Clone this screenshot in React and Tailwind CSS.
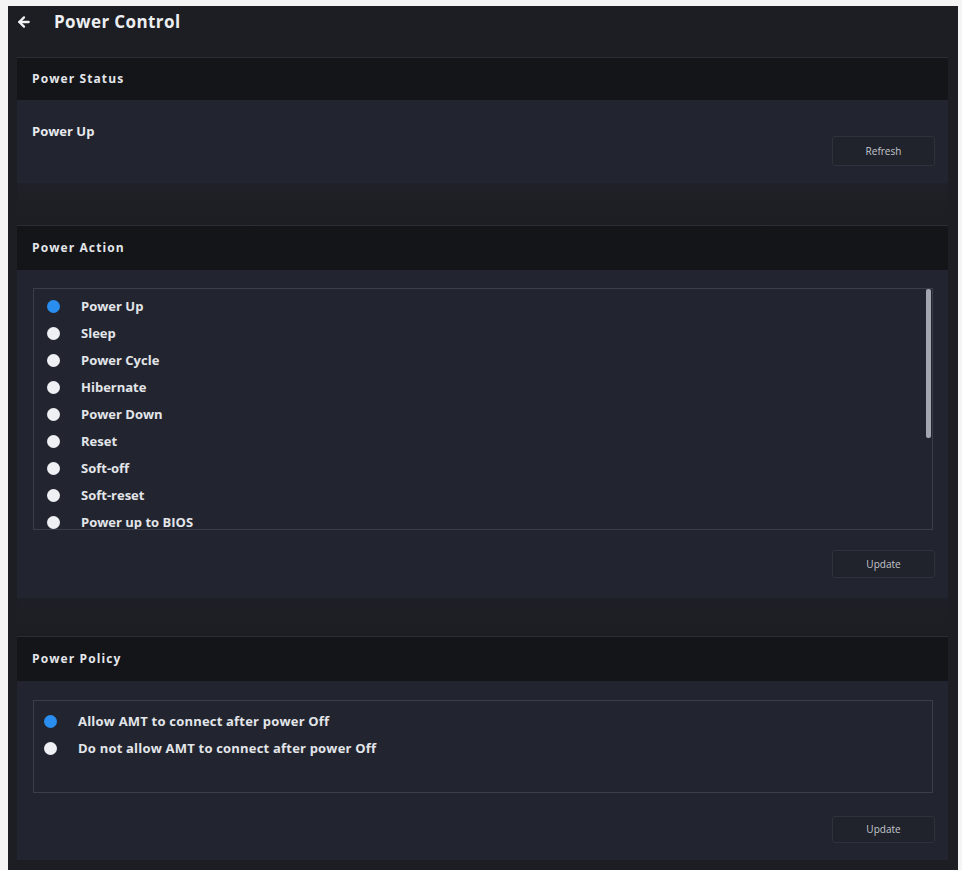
import { ArrowLeft } from 'lucide-react';

const actions = [
  'Power Up',
  'Sleep',
  'Power Cycle',
  'Hibernate',
  'Power Down',
  'Reset',
  'Soft-off',
  'Soft-reset',
  'Power up to BIOS',
];

const policies = [
  'Allow AMT to connect after power Off',
  'Do not allow AMT to connect after power Off',
];

function Radio({ checked }) {
  return (
    <span
      className={`block w-[13px] h-[13px] rounded-full shrink-0 ${
        checked ? 'bg-[#2a8df0]' : 'bg-[#eef0f4]'
      }`}
    />
  );
}

function SectionHeader({ title, className = 'h-[45px]' }) {
  return (
    <div className={`${className} bg-[#131519] flex items-center pl-[15px] border-t border-[#2a2d35]`}>
      <span className="text-[12px] font-bold tracking-[1.1px] text-[#e4e6ea]">{title}</span>
    </div>
  );
}

function Button({ label, className = 'h-[28px]' }) {
  return (
    <button
      className={`${className} w-[103px] rounded-[3px] border border-[#2e323d] bg-[#20232b] text-[10px] text-[#c3c6cd] flex items-center justify-center`}
    >
      {label}
    </button>
  );
}

export default function App() {
  return (
    <div
      className="min-h-[870px] bg-[#f4f4f5] pt-[6px] pl-[8px]"
      style={{ fontFamily: '"Open Sans", "Noto Sans", sans-serif' }}
    >
      <div className="w-[950px] h-[864px] bg-[#1c1e23] overflow-hidden">
        <div className="h-[32px] flex items-center pl-[8px] gap-[22px]">
          <ArrowLeft size={16} strokeWidth={3.4} className="text-[#f1f2f4]" />
          <span className="text-[17px] font-bold text-[#eceef1] tracking-[0.4px]">Power Control</span>
        </div>

        <div className="mt-[19px] ml-[9px] w-[931px]">
          {/* Power Status */}
          <SectionHeader title="Power Status" className="h-[43px]" />
          <div className="h-[83px] bg-[#22252f] flex justify-between pl-[15px] pr-[13px] pt-[22px]">
            <span className="text-[13px] font-bold text-[#e8eaee]">Power Up</span>
            <div className="pt-[14px]">
              <Button label="Refresh" className="h-[30px]" />
            </div>
          </div>

          <div className="h-[42px] bg-gradient-to-b from-[#1f2128] to-[#1b1d22]" />

          {/* Power Action */}
          <SectionHeader title="Power Action" />
          <div className="h-[328px] bg-[#22252f] pt-[18px] pl-[16px] pr-[13px]">
            <div className="relative w-[900px] h-[242px] border border-[#3a3e4a] overflow-hidden">
              <ul className="pt-[4px] pl-[13px]">
                {actions.map((a, i) => (
                  <li key={a} className="h-[27px] flex items-center gap-[21px]">
                    <Radio checked={i === 0} />
                    <span className="text-[13px] leading-[15px] font-bold text-[#e3e5ea]">{a}</span>
                  </li>
                ))}
              </ul>
              <div className="absolute right-[1px] top-0 w-[5px] h-[149px] rounded-[2px] bg-[#a3a6ae]" />
            </div>
            <div className="flex justify-end mt-[20px]">
              <Button label="Update" />
            </div>
          </div>

          <div className="h-[38px] bg-gradient-to-b from-[#1e2027] to-[#1b1d22]" />

          {/* Power Policy */}
          <SectionHeader title="Power Policy" />
          <div className="h-[179px] bg-[#22252f] pt-[19px] pl-[16px] pr-[13px]">
            <div className="w-[900px] h-[93px] border border-[#3a3e4a] pt-[7px] pl-[10px]">
              {policies.map((p, i) => (
                <div key={p} className="h-[27px] flex items-center gap-[21px]">
                  <Radio checked={i === 0} />
                  <span className="text-[13px] font-bold text-[#e3e5ea] tracking-[0.2px]">{p}</span>
                </div>
              ))}
            </div>
            <div className="flex justify-end mt-[23px]">
              <Button label="Update" className="h-[27px]" />
            </div>
          </div>
        </div>
      </div>
    </div>
  );
}
